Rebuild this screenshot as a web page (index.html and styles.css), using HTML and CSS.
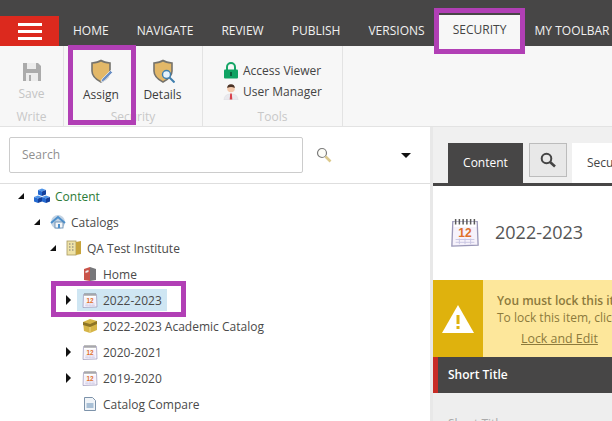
FILE: index.html
```html
<!DOCTYPE html>
<html lang="en">
<head>
  <meta charset="UTF-8">
  <title>Security</title>
  <link rel="stylesheet" href="styles.css">
</head>
<body>
  <svg class="sprites" width="0" height="0">
    <defs>
      <g id="cal">
        <path d="M1.500 2.500h13l.5 12.500-14 .5z" fill="#f6f2fb" stroke="#9a97b8" stroke-width=".7"/>
        <path d="M2 2.500h12v2.800h-12z" fill="#fff"/>
        <path d="M3 1v3M5 1v3M7 1v3M9 1v3M11 1v3M13 1v3" stroke="#5a5a5a" stroke-width=".8"/>
        <text x="8" y="10.600" text-anchor="middle" font-family="'Liberation Sans', sans-serif" font-size="6.400" font-weight="700" fill="#e0702a">12</text>
        <path d="M3 12h10M3 13.500h10M5 11.500v3M8 11.500v3M11 11.500v3" stroke="#c9c5e2" stroke-width=".5"/>
      </g>
      <path id="shield" d="M3 4Q9 3.500 12 1.500q3 2 9 2.500v8q0 6.500-9 11-9-4.500-9-11z"/>
      <g id="cube">
        <path d="M4 0l4 1.500-4 1.500-4-1.500z" fill="#4d93e8"/>
        <path d="M0 1.500l4 1.500v4.500l-4-1.500z" fill="#2469cf"/>
        <path d="M8 1.500l-4 1.500v4.500l4-1.500z" fill="#123f9c"/>
      </g>
    </defs>
  </svg>

  <header class="topbar">
    <div class="menu-row">
      <button class="burger"><span></span><span></span><span></span></button>
      <nav class="tabs">
        <span class="tab home">HOME</span>
        <span class="tab navigate">NAVIGATE</span>
        <span class="tab review">REVIEW</span>
        <span class="tab publish">PUBLISH</span>
        <span class="tab versions">VERSIONS</span>
        <span class="tab active">SECURITY</span>
        <span class="tab toolbar">MY TOOLBAR</span>
      </nav>
    </div>
  </header>

  <section class="ribbon">
    <div class="group group-write">
      <div class="big-btn muted">
        <svg width="18" height="18" viewBox="0 0 18 18"><path d="M0 0h15l3 3v15H0z" fill="#ababab"/><rect x="4" y="0" width="9" height="6" fill="#ececec"/><rect x="3" y="10" width="12" height="8" fill="#ececec"/><rect x="6" y="12" width="2" height="6" fill="#ababab"/></svg>
        <span>Save</span>
      </div>
      <div class="group-label">Write</div>
    </div>
    <div class="group group-security">
      <div class="btn-row">
        <div class="big-btn assign">
          <svg width="24" height="24" viewBox="0 0 24 24"><use href="#shield" fill="#e3b868" stroke="#75736d" stroke-width="1.600"/><path d="M13 20l8.500-8.500 2 2-8.500 8.500-3 1z" fill="#6b8fc4" stroke="#fff" stroke-width=".6"/></svg>
          <span>Assign</span>
        </div>
        <div class="big-btn details">
          <svg width="24" height="24" viewBox="0 0 24 24"><use href="#shield" fill="#e3b868" stroke="#75736d" stroke-width="1.600"/><circle cx="15.500" cy="15.500" r="4" fill="#e6f3fb" stroke="#3f7fae" stroke-width="1.400"/><path d="M18.500 18.500l5 5" stroke="#3f7fae" stroke-width="2"/></svg>
          <span>Details</span>
        </div>
      </div>
      <div class="group-label">Security</div>
    </div>
    <div class="group group-tools">
      <div class="small-list">
        <div class="small-btn">
          <svg width="16" height="17" viewBox="0 0 16 17"><path d="M4 8V5a4 4 0 0 1 8 0v3" fill="none" stroke="#15a566" stroke-width="2"/><rect x="1" y="7.500" width="14" height="9" rx="1" fill="#0fa363"/><rect x="7" y="10" width="2" height="4" fill="#0a5f3c"/></svg>
          <span>Access Viewer</span>
        </div>
        <div class="small-btn">
          <svg width="16" height="17" viewBox="0 0 16 17"><path d="M1 17q0-6 7-6t7 6z" fill="#e9e9ee" stroke="#d8d8de" stroke-width=".5"/><circle cx="8" cy="5.500" r="3.800" fill="#f3c9ac"/><path d="M4.200 5a3.800 3.800 0 0 1 7.600 0q-3.800-2-7.600 0z" fill="#4a3226"/><path d="M7.200 10.500h1.600l.5 6H6.700z" fill="#d8404c"/></svg>
          <span>User Manager</span>
        </div>
      </div>
      <div class="group-label">Tools</div>
    </div>
  </section>

  <main class="workspace">
    <aside class="tree-pane">
      <div class="search-row">
        <div class="search-box">Search</div>
        <svg class="search-glass" width="16" height="16" viewBox="0 0 16 16"><circle cx="6" cy="6" r="4.500" fill="#fdfdf8" stroke="#7c7c7c" stroke-width="1.200"/><path d="M9.500 9.500l5 5" stroke="#dcc98c" stroke-width="2.600"/></svg>
        <span class="search-caret"></span>
      </div>
      <ul class="tree">
        <li class="node lvl0">
          <span class="arrow open"></span>
          <svg width="16" height="16" viewBox="0 0 16 16"><use href="#cube" x="4" y="0.500"/><use href="#cube" x="0" y="7.500"/><use href="#cube" x="8" y="7.500"/></svg>
          <span class="label green">Content</span>
        </li>
        <li class="node lvl1">
          <span class="arrow open"></span>
          <svg width="16" height="16" viewBox="0 0 16 16"><circle cx="8" cy="8" r="7" fill="#c3d3e3"/><path d="M1 9l7-6 7 6" fill="none" stroke="#4d90cc" stroke-width="2"/><rect x="5" y="8" width="8" height="6" fill="#f4f6f8" stroke="#5b84ad" stroke-width=".8"/><rect x="8" y="10" width="2" height="4" fill="#4d90cc"/></svg>
          <span class="label">Catalogs</span>
        </li>
        <li class="node lvl2">
          <span class="arrow open"></span>
          <svg width="16" height="16" viewBox="0 0 16 16"><rect x="1" y="1" width="9" height="14" fill="#efe3a8" stroke="#a89a60" stroke-width=".8"/><path d="M10 2l5-1v13l-5 1z" fill="#c7a43c"/><path d="M3 4h1.500M6 4h1.500M3 7h1.500M6 7h1.500M3 10h1.500M6 10h1.500" stroke="#777" stroke-width="1.200"/></svg>
          <span class="label">QA Test Institute</span>
        </li>
        <li class="node lvl3">
          <span class="arrow none"></span>
          <svg width="16" height="16" viewBox="0 0 16 16"><path d="M2 3l6-2v14l-6-1z" fill="#c9544a"/><path d="M8 1l6 2v11l-6 1z" fill="#77777a"/><path d="M3.500 5l3-1v2l-3 1z" fill="#eee"/></svg>
          <span class="label">Home</span>
        </li>
        <li class="node lvl3 selected">
          <span class="arrow closed"></span>
          <span class="sel-wrap">
            <svg width="16" height="16" viewBox="0 0 16 16"><use href="#cal"/></svg>
            <span class="label">2022-2023</span>
          </span>
        </li>
        <li class="node lvl3">
          <span class="arrow none"></span>
          <svg width="16" height="16" viewBox="0 0 16 16"><path d="M1 4l7-3 7 2v9l-7 3-6-2z" fill="#d6b548"/><path d="M1 4l7 2 7-3v3l-7 3-7-2z" fill="#8d7426"/><path d="M8 9v6" stroke="#eed98a"/></svg>
          <span class="label">2022-2023 Academic Catalog</span>
        </li>
        <li class="node lvl3">
          <span class="arrow closed"></span>
          <svg width="16" height="16" viewBox="0 0 16 16"><use href="#cal"/></svg>
          <span class="label">2020-2021</span>
        </li>
        <li class="node lvl3">
          <span class="arrow closed"></span>
          <svg width="16" height="16" viewBox="0 0 16 16"><use href="#cal"/></svg>
          <span class="label">2019-2020</span>
        </li>
        <li class="node lvl3">
          <span class="arrow none"></span>
          <svg width="16" height="16" viewBox="0 0 16 16"><path d="M2.500 1.500h8l3 3v10h-11z" fill="#f0f4f8" stroke="#7d93aa"/><rect x="4.500" y="7" width="7" height="5" fill="#a9c0d6"/></svg>
          <span class="label">Catalog Compare</span>
        </li>
      </ul>
    </aside>

    <section class="editor">
      <div class="editor-tabs">
        <span class="content-tab">Content</span>
        <span class="glass-btn">
          <svg width="18" height="18" viewBox="0 0 18 18"><circle cx="7.500" cy="7.500" r="4.800" fill="none" stroke="#444" stroke-width="2"/><path d="M11 11l5 4.500" stroke="#444" stroke-width="2.600"/></svg>
        </span>
        <span class="security-tab">Security</span>
      </div>
      <div class="item-head">
        <svg width="30" height="30" viewBox="0 0 16 16"><use href="#cal"/></svg>
        <span>2022-2023</span>
      </div>
      <div class="warning">
        <div class="warn-side">
          <svg width="32" height="28" viewBox="0 0 32 28"><path d="M16 0l16 28H0z" fill="#fff"/><rect x="14.500" y="10" width="3" height="9" fill="#dfb20d"/><rect x="14.500" y="21" width="3" height="3" fill="#dfb20d"/></svg>
        </div>
        <div class="warn-text">
          <b>You must lock this item before you can edit it.</b>
          <span>To lock this item, click Lock and Edit on the Home tab.</span>
          <a class="warn-link">Lock and Edit</a>
        </div>
      </div>
      <div class="section-bar">Short Title</div>
      <div class="section-body">Short Title:</div>
    </section>

    <div class="hl hl-security"></div>
    <div class="hl hl-assign"></div>
    <div class="hl hl-node"></div>
  </main>
</body>
</html>
```

FILE: styles.css
```css
* {
  box-sizing: border-box;
}

html, body {
  margin: 0;
  padding: 0;
  width: 612px;
  height: 421px;
  overflow: hidden;
}

body {
  position: relative;
  font-family: 'Open Sans', sans-serif;
  font-size: 12px;
  color: #444;
  background-color: #fff;
}

.sprites {
  position: absolute;
}

/* top bar */
.topbar {
  height: 46px;
  background-color: #474646;
  padding-top: 16px;
}

.menu-row {
  display: flex;
  height: 30px;
}

.burger {
  width: 59px;
  height: 30px;
  background-color: #dc291e;
  border: none;
  padding: 0;
  display: flex;
  flex-direction: column;
  justify-content: center;
  align-items: center;
  gap: 4px;
}

.burger span {
  width: 24px;
  height: 3px;
  background-color: #fff;
}

.tabs {
  display: flex;
  height: 30px;
  white-space: nowrap;
}

.tab {
  color: #f1f1f1;
  font-size: 12px;
  line-height: 30px;
}

.tab.home { margin-left: 14px; }
.tab.navigate { margin-left: 28px; }
.tab.review { margin-left: 28px; }
.tab.publish { margin-left: 28px; }
.tab.versions { margin-left: 28px; }

.tab.active {
  margin-left: 14px;
  width: 82px;
  margin-top: -1px;
  height: 31px;
  text-align: center;
  color: #444;
  background-color: #f7f7f7;
}

.tab.toolbar { margin-left: 14px; }

/* ribbon */
.ribbon {
  display: flex;
  height: 81px;
  background-color: #f7f7f7;
  border-bottom: 1px solid #e3e3e3;
}

.group {
  display: flex;
  flex-direction: column;
  border-right: 1px solid #e3e3e3;
}

.group-write { width: 64px; }
.group-security { width: 139px; }
.group-tools { width: 140px; }

.btn-row {
  display: flex;
}

.big-btn {
  display: flex;
  flex-direction: column;
  align-items: center;
  font-size: 12px;
  height: 63px;
  padding-top: 13px;
  color: #3c3c3c;
}

.big-btn svg {
  height: 24px;
  margin-bottom: 3px;
}

.big-btn span {
  line-height: 17px;
}

.big-btn.muted {
  color: #c4c4c4;
  padding-top: 17px;
}

.big-btn.muted svg {
  height: 18px;
  margin-bottom: 4px;
}

.assign {
  width: 68px;
  padding-left: 6px;
}

.details {
  width: 61px;
}

.group-label {
  text-align: center;
  color: #c8c8c8;
  line-height: 16px;
}

.small-list {
  height: 63px;
  padding: 14px 0 0 20px;
}

.small-btn {
  display: flex;
  align-items: center;
  gap: 4px;
  height: 21px;
}

/* tree pane */
.workspace {
  display: flex;
  height: 294px;
}

.tree-pane {
  flex: none;
  width: 433px;
  border-right: 3px solid #e8e8e8;
}

.search-row {
  display: flex;
  align-items: center;
  height: 57px;
  padding: 10px 0 10px 9px;
  border-bottom: 1px solid #dedede;
}

.search-box {
  width: 294px;
  height: 36px;
  padding: 0 12px;
  line-height: 34px;
  font-size: 12px;
  color: #8f8f8f;
  border: 1px solid #ccc;
  border-radius: 2px;
}

.search-glass {
  margin-left: 13px;
}

.search-caret {
  margin-left: 69px;
  border-left: 5px solid transparent;
  border-right: 5px solid transparent;
  border-top: 5px solid #111;
}

.tree {
  list-style: none;
  margin: 0;
  padding: 0;
}

.node {
  display: flex;
  align-items: center;
  height: 26px;
  padding-bottom: 2px;
  white-space: nowrap;
}

.node svg {
  flex: none;
  margin-right: 5px;
}

.lvl0 { padding-left: 18px; }
.lvl1 { padding-left: 34px; }
.lvl2 { padding-left: 50px; }
.lvl3 { padding-left: 66px; }

.arrow {
  flex: none;
  width: 16px;
  display: block;
}

.arrow.open::before {
  content: "";
  display: block;
  border-left: 6px solid transparent;
  border-bottom: 6px solid #111;
  width: 0;
}

.arrow.closed::before {
  content: "";
  display: block;
  width: 0;
  border-top: 5px solid transparent;
  border-bottom: 5px solid transparent;
  border-left: 5px solid #111;
}

.label {
  color: #4a4a4a;
  font-size: 12px;
}

.label.green {
  color: #2c7a37;
}

.sel-wrap {
  display: flex;
  align-items: center;
  flex: none;
  height: 22px;
  width: 90px;
  margin-left: -5px;
  padding-left: 5px;
  background-color: #cfe6f3;
}

/* editor */
.editor {
  flex: 1;
  min-width: 0;
  background-color: #fff;
}

.editor-tabs {
  display: flex;
  height: 59px;
  padding: 16px 0 0 15px;
  background-color: #f0f0f0;
  border-bottom: 3px solid #474646;
}

.content-tab {
  flex: none;
  width: 75px;
  height: 40px;
  line-height: 40px;
  text-align: center;
  color: #fff;
  background-color: #474646;
}

.glass-btn {
  display: flex;
  flex: none;
  align-items: center;
  justify-content: center;
  width: 38px;
  height: 34px;
  margin-left: 6px;
  background-color: #e8e8e8;
  border: 1px solid #bcbcbc;
}

.security-tab {
  flex: 1;
  height: 40px;
  margin-left: 5px;
  padding-left: 15px;
  line-height: 40px;
  white-space: nowrap;
  overflow: hidden;
  background-color: #fff;
}

.item-head {
  display: flex;
  align-items: center;
  height: 94px;
  padding: 0 0 2px 17px;
  gap: 15px;
  font-size: 18px;
  color: #555;
}

.warning {
  display: flex;
  height: 77px;
  background-color: #fde79b;
  white-space: nowrap;
  overflow: hidden;
}

.warn-side {
  display: flex;
  align-items: center;
  justify-content: center;
  flex: none;
  width: 50px;
  background-color: #dfb20d;
}

.warn-text {
  display: flex;
  flex-direction: column;
  flex: none;
  padding: 12px 0 0 14px;
  width: 240px;
  line-height: 17px;
  color: #8c7a3c;
}

.warn-text b {
  font-weight: 600;
}

.warn-link {
  margin: 4px 0 0 24px;
  font-size: 12.400px;
  text-decoration: underline;
}

.section-bar {
  height: 36px;
  line-height: 36px;
  padding-left: 10px;
  color: #fff;
  font-weight: 600;
  background-color: #474646;
  border-left: 5px solid #c72b25;
}

.section-body {
  height: 30px;
  padding: 22px 0 0 15px;
  color: #aaa;
  background-color: #eee;
}

/* purple highlight boxes from the annotated screenshot */
.hl {
  position: absolute;
  border: 5px solid #b13fb5;
}

.hl-security { left: 434px; top: 8px; width: 91px; height: 46px; }
.hl-assign { left: 68px; top: 45px; width: 68px; height: 80px; }
.hl-node { left: 51px; top: 281px; width: 135px; height: 36px; }
```
